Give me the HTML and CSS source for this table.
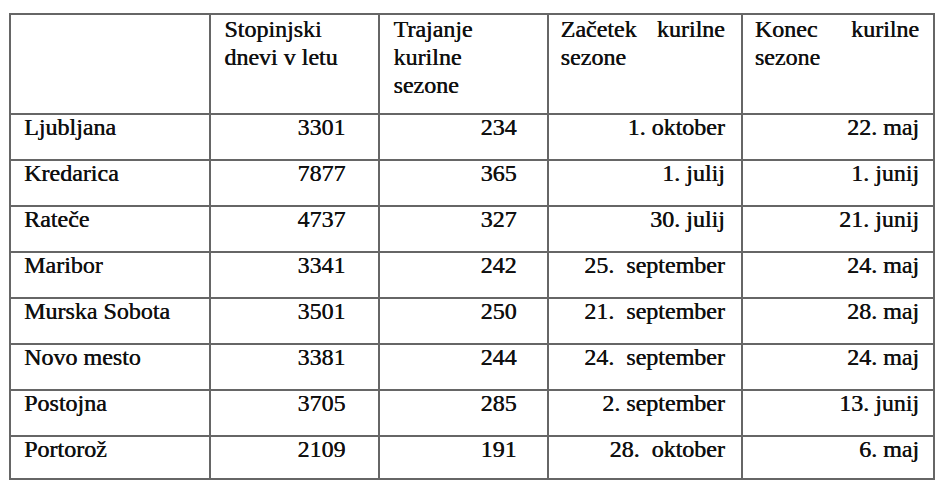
FILE: index.html
```html
<!DOCTYPE html>
<html lang="sl">
<head>
<meta charset="utf-8">
<title>Stopinjski dnevi</title>
<link rel="stylesheet" href="styles.css">
</head>
<body>
<div class="page">
<table class="data">
  <colgroup>
    <col class="c1"><col class="c2"><col class="c3"><col class="c4"><col class="c5">
  </colgroup>
  <tr class="head">
    <td class="name"></td>
    <td class="num">Stopinjski dnevi v letu</td>
    <td class="num3">Trajanje kurilne sezone</td>
    <td class="date just">Začetek kurilne sezone</td>
    <td class="date just">Konec kurilne sezone</td>
  </tr>
  <tr class="row">
    <td class="name">Ljubljana</td><td class="num r">3301</td><td class="num3 r">234</td><td class="date r">1. oktober</td><td class="date r">22. maj</td>
  </tr>
  <tr class="row">
    <td class="name">Kredarica</td><td class="num r">7877</td><td class="num3 r">365</td><td class="date r">1. julij</td><td class="date r">1. junij</td>
  </tr>
  <tr class="row">
    <td class="name">Rateče</td><td class="num r">4737</td><td class="num3 r">327</td><td class="date r">30. julij</td><td class="date r">21. junij</td>
  </tr>
  <tr class="row">
    <td class="name">Maribor</td><td class="num r">3341</td><td class="num3 r">242</td><td class="date r">25.&nbsp; september</td><td class="date r">24. maj</td>
  </tr>
  <tr class="row">
    <td class="name">Murska Sobota</td><td class="num r">3501</td><td class="num3 r">250</td><td class="date r">21.&nbsp; september</td><td class="date r">28. maj</td>
  </tr>
  <tr class="row">
    <td class="name">Novo mesto</td><td class="num r">3381</td><td class="num3 r">244</td><td class="date r">24.&nbsp; september</td><td class="date r">24. maj</td>
  </tr>
  <tr class="row">
    <td class="name">Postojna</td><td class="num r">3705</td><td class="num3 r">285</td><td class="date r">2. september</td><td class="date r">13. junij</td>
  </tr>
  <tr class="row last">
    <td class="name">Portorož</td><td class="num r">2109</td><td class="num3 r">191</td><td class="date r">28.&nbsp; oktober</td><td class="date r">6. maj</td>
  </tr>
</table>
</div>
</body>
</html>
```
FILE: styles.css
```css
html, body {
  margin: 0;
  padding: 0;
  background: #ffffff;
}

.page {
  padding: 13px 0 0 9px;
}

.data {
  border-collapse: collapse;
  table-layout: fixed;
  width: 926px;
  font-family: "Liberation Serif", Tinos, "Nimbus Roman", "DejaVu Serif", serif;
  font-size: 24px;
  line-height: 28px;
  color: #101010;
  text-shadow: 0.45px 0 0 #101010;
}

.c1 { width: 200px; }
.c2 { width: 169px; }
.c3 { width: 168px; }
.c4 { width: 194px; }
.c5 { width: 192px; }

.data td {
  border: 2px solid #666666;
  vertical-align: top;
  padding: 0 14px 0 13px;
}

.head { height: 100px; }
.row { height: 46px; }
.row.last { height: 43px; }

.row td { line-height: 25px; }

.data td.num { padding-right: 33px; padding-left: 13px; }
.data td.num3 { padding-right: 30px; padding-left: 13px; }
.data td.date { padding-right: 16px; padding-left: 12px; }
.data td.date:last-child { padding-right: 14px; }

.r { text-align: right; }
.just { text-align: justify; }
```
